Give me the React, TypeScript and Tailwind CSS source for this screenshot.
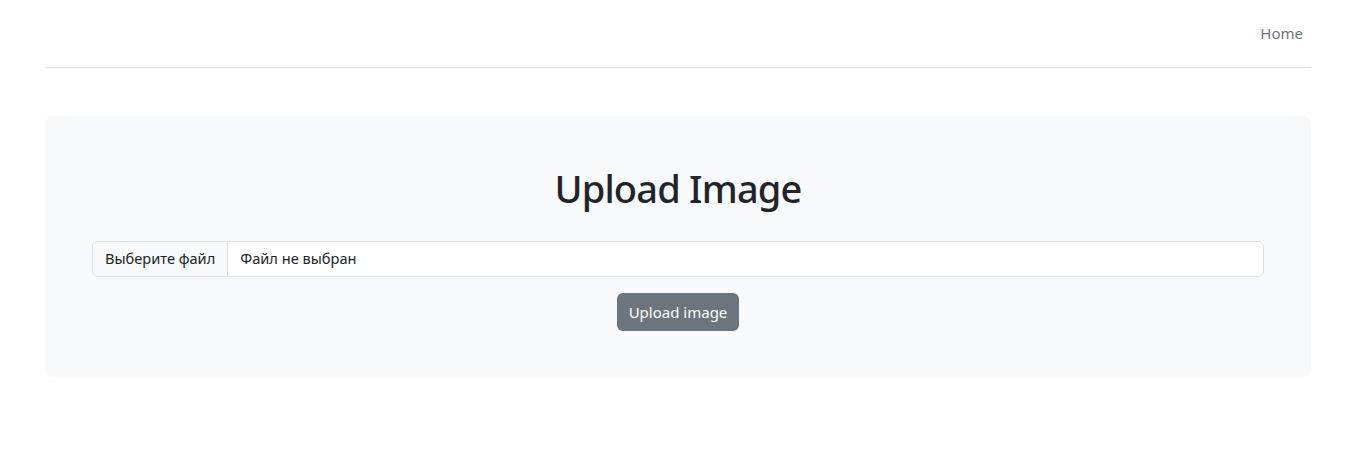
function App() {
  return (
    <div className="min-h-dvh bg-white font-['Noto_Sans','Open_Sans',sans-serif] text-[#212529]">
      <div className="ml-[45px] w-[1266px]">
        <header className="flex h-[68px] items-center justify-end border-b border-[#dee2e6] pr-[8px]">
          <a href="#" className="text-[15px] text-[#6c757d]">
            Home
          </a>
        </header>

        <main className="mt-[48px] rounded-[8px] bg-[#f8f9fa] px-[47px] pt-[48px] pb-[46px]">
          <h1 className="text-center text-[38px] font-medium leading-[48px] tracking-[-0.8px]">
            Upload Image
          </h1>
          <div className="mt-[29px] flex h-[36px] overflow-hidden rounded-[6px] border border-[#dee2e6] bg-white text-[14.6px]">
            <span className="flex items-center border-r border-[#dee2e6] bg-[#f8f9fa] px-[12px]">
              Выберите файл
            </span>
            <span className="flex items-center px-[12px]">Файл не выбран</span>
          </div>
          <div className="mt-[16px] flex justify-center">
            <button
              type="button"
              className="h-[38px] rounded-[6px] bg-[#6c757d] px-[12px] text-[15px] text-white"
            >
              Upload image
            </button>
          </div>
        </main>
      </div>
    </div>
  )
}

export default App
